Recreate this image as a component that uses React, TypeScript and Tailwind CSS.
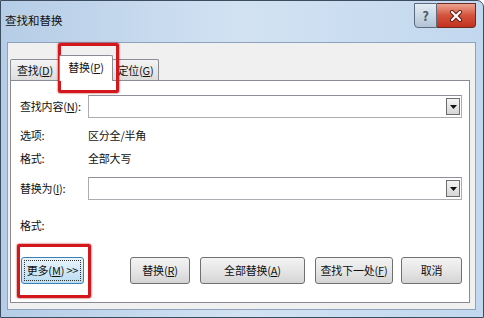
import React from "react";

const font = { fontFamily: '"Noto Sans CJK SC", "Liberation Sans", sans-serif' };

function Mn({ text, k }: { text: string; k: string }) {
  return (
    <span className="whitespace-nowrap">
      {text}(<span className="underline">{k}</span>)
    </span>
  );
}

function Combo() {
  return (
    <div className="flex-1 h-[23px] flex items-stretch bg-white border border-[#abadb3] border-t-[#8e9099]">
      <div className="flex-1" />
      <div className="w-[14px] my-[2px] mr-[1px] border border-[#6d6d6d] bg-gradient-to-b from-[#f4f4f4] to-[#d6d6d6] flex items-center justify-center">
        <svg width="7" height="4" viewBox="0 0 7 4">
          <path d="M0 0h7L3.5 4z" fill="#111" />
        </svg>
      </div>
    </div>
  );
}

function Btn({ w, ml, children, focus }: { w: string; ml: string; children: React.ReactNode; focus?: boolean }) {
  return (
    <div
      className={
        "h-[27px] rounded-[3px] border flex items-center justify-center whitespace-nowrap text-[#111] " +
        w +
        " " +
        ml +
        " " +
        (focus
          ? "border-[#3c7fb1] bg-gradient-to-b from-[#eaf5fc] to-[#b9dcf3] p-[2px]"
          : "border-[#707070] bg-gradient-to-b from-[#f3f3f3] via-[#e6e6e6] to-[#d4d4d4]")
      }
    >
      {focus ? (
        <div className="w-full h-full border border-dotted border-[#333] flex items-center justify-center">
          {children}
        </div>
      ) : (
        children
      )}
    </div>
  );
}

export default function App() {
  return (
    <div className="w-[484px] h-[318px] overflow-hidden bg-white" style={font}>
      <div className="relative w-full h-full flex flex-col rounded-tr-[7px] border border-[#3d4d60] bg-gradient-to-r from-[#b5cde6] via-[#d2e2f3] to-[#c2d8ee]">
        {/* title bar */}
        <div className="h-[41px] flex items-center pl-[4px] pb-[2px]">
          <span className="text-[11.5px] text-[#111] whitespace-nowrap">查找和替换</span>
        </div>
        <div className="absolute top-[2px] right-[7px] flex h-[25px]">
          <div className="w-[23px] border border-[#5b6b7d] rounded-bl-[4px] bg-gradient-to-b from-[#e4ecf4] to-[#b2c3d5] flex items-center justify-center text-[13px] font-bold text-[#4a5868]">
            ?
          </div>
          <div className="w-[39px] border border-l-0 border-[#6b2a20] rounded-br-[4px] bg-gradient-to-b from-[#eaa392] via-[#d3523c] to-[#c1311d] flex items-center justify-center">
            <svg width="12" height="12" viewBox="0 0 12 12">
              <path d="M2 2l8 8M10 2l-8 8" stroke="#5a1a10" strokeWidth="4" strokeLinecap="round" />
              <path d="M2 2l8 8M10 2l-8 8" stroke="#fff" strokeWidth="2.2" strokeLinecap="round" />
            </svg>
          </div>
        </div>

        {/* client area */}
        <div className="flex-1 ml-[6px] mr-[7px] mb-[7px] bg-[#f0f0f0] border border-[#8da3bb] flex flex-col pl-[2px] pr-[5px] pt-[12px] pb-[6px] text-[11px] tracking-[-0.2px] text-[#111]">
          {/* tabs */}
          <div className="h-[26px] flex items-end">
            <div className="w-[50px] h-[22px] border border-b-0 border-[#898c95] rounded-t-[2px] bg-gradient-to-b from-[#f4f4f4] to-[#dcdcdc] flex items-center justify-center">
              <Mn text="查找" k="D" />
            </div>
            <div className="relative z-10 w-[54px] h-[26px] -ml-px border border-b-0 border-[#898c95] rounded-t-[2px] bg-white flex items-center justify-center pb-[2px]">
              <Mn text="替换" k="P" />
            </div>
            <div className="w-[47px] h-[22px] -ml-px border border-b-0 border-[#898c95] rounded-t-[2px] bg-gradient-to-b from-[#f4f4f4] to-[#dcdcdc] flex items-center justify-center">
              <Mn text="定位" k="G" />
            </div>
          </div>

          {/* panel */}
          <div className="flex-1 -mt-px bg-white border border-[#898c95] flex flex-col pl-[9px] pr-[7px] pt-[14px]">
            <div className="flex items-center h-[23px]">
              <div className="w-[68px] whitespace-nowrap">
                <Mn text="查找内容" k="N" />:
              </div>
              <Combo />
            </div>
            <div className="flex items-center h-[16px] mt-[9px]">
              <div className="w-[68px]">选项:</div>
              <div>区分全/半角</div>
            </div>
            <div className="flex items-center h-[16px] mt-[7px]">
              <div className="w-[68px]">格式:</div>
              <div>全部大写</div>
            </div>
            <div className="flex items-center h-[23px] mt-[11px]">
              <div className="w-[68px] whitespace-nowrap">
                <Mn text="替换为" k="I" />:
              </div>
              <Combo />
            </div>
            <div className="flex items-center h-[16px] mt-[17px]">
              <div>格式:</div>
            </div>
            <div className="flex items-center mt-[24px] -ml-[1px]">
              <Btn w="w-[63px]" ml="ml-[2px]" focus>
                <span className="whitespace-nowrap">
                  更多(<span className="underline">M</span>) &gt;&gt;
                </span>
              </Btn>
              <Btn w="w-[60px]" ml="ml-[46px]">
                <Mn text="替换" k="R" />
              </Btn>
              <Btn w="w-[105px]" ml="ml-[10px]">
                <Mn text="全部替换" k="A" />
              </Btn>
              <Btn w="w-[78px]" ml="ml-[10px]">
                <Mn text="查找下一处" k="F" />
              </Btn>
              <Btn w="w-[61px]" ml="ml-[8px]">
                取消
              </Btn>
            </div>
          </div>
        </div>

        {/* red highlight boxes */}
        <div className="absolute left-[57px] top-[42px] w-[61px] h-[50px] border-[3px] border-[#d3171c] rounded-[2px] shadow-[0_0_2px_#a00]" />
        <div className="absolute left-[16px] top-[243px] w-[74px] h-[54px] border-[3px] border-[#d3171c] rounded-[2px] shadow-[0_0_2px_#a00]" />
      </div>
    </div>
  );
}
